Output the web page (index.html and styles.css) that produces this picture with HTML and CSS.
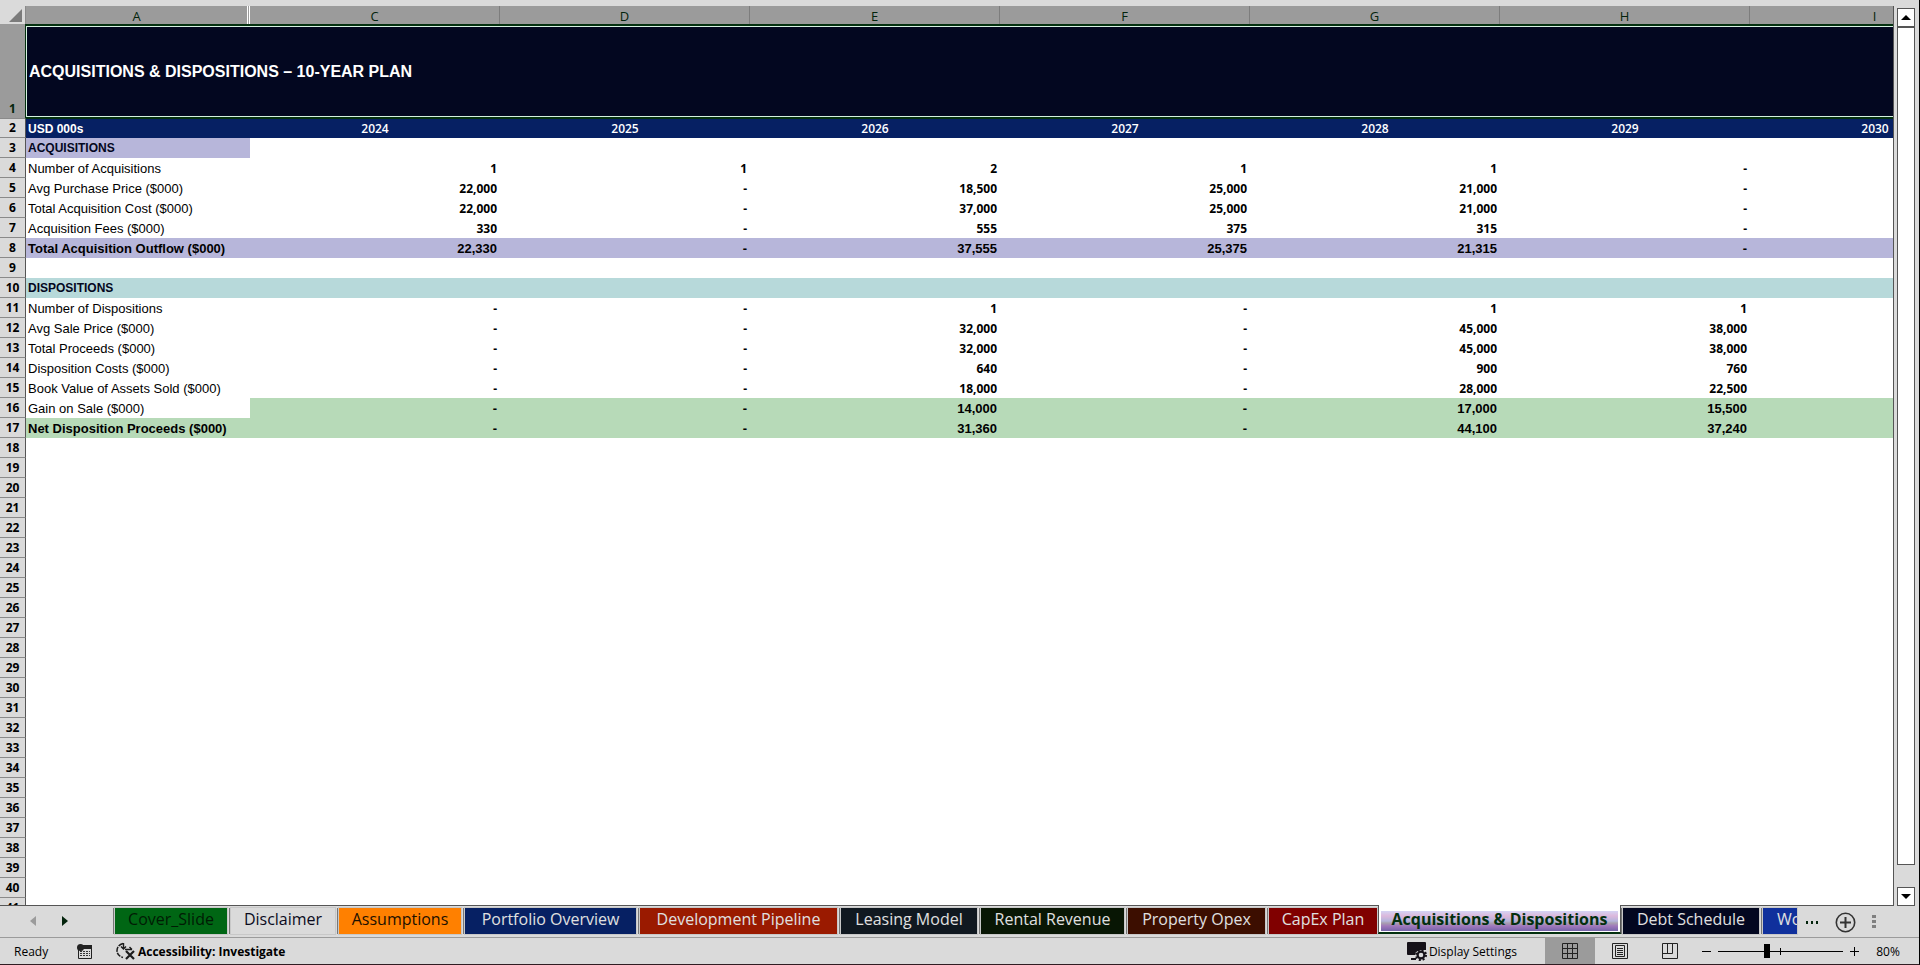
FILE: index.html
```html
<!DOCTYPE html>
<html lang="en">
<head>
    <meta charset="UTF-8">
    <meta name="viewport" content="width=device-width, initial-scale=1.0">
    <title>Acquisitions &amp; Dispositions</title>
    <link rel="stylesheet" href="styles.css">
</head>
<body>
    <div class="app">
        <div class="main">
            <div class="sheet">
                <table class="grid">
                    <colgroup>
                        <col class="col-head">
                        <col class="col-label">
                        <col span="7">
                    </colgroup>
                    <thead>
                        <tr class="letters">
                            <th class="corner"><svg width="13" height="13" viewBox="0 0 13 13"><path d="M13 0v13H0z" fill="#7b7b7b"/></svg></th>
                            <th class="after-hidden">A</th>
                            <th>C</th>
                            <th>D</th>
                            <th>E</th>
                            <th>F</th>
                            <th>G</th>
                            <th>H</th>
                            <th>I</th>
                        </tr>
                    </thead>
                    <tbody id="rows">
                        <tr class="title"><th>1</th><td colspan="8">ACQUISITIONS &amp; DISPOSITIONS – 10-YEAR PLAN</td></tr>
                        <tr class="years"><th>2</th><td>USD 000s</td><td>2024</td><td>2025</td><td>2026</td><td>2027</td><td>2028</td><td>2029</td><td>2030</td></tr>
                        <tr class="section"><th>3</th><td class="lilac">ACQUISITIONS</td><td colspan="7"></td></tr>
                        <tr><th>4</th><td>Number of Acquisitions</td><td>1</td><td>1</td><td>2</td><td>1</td><td>1</td><td>-</td><td></td></tr>
                        <tr><th>5</th><td>Avg Purchase Price ($000)</td><td>22,000</td><td>-</td><td>18,500</td><td>25,000</td><td>21,000</td><td>-</td><td></td></tr>
                        <tr><th>6</th><td>Total Acquisition Cost ($000)</td><td>22,000</td><td>-</td><td>37,000</td><td>25,000</td><td>21,000</td><td>-</td><td></td></tr>
                        <tr><th>7</th><td>Acquisition Fees ($000)</td><td>330</td><td>-</td><td>555</td><td>375</td><td>315</td><td>-</td><td></td></tr>
                        <tr class="total lilac"><th>8</th><td>Total Acquisition Outflow ($000)</td><td>22,330</td><td>-</td><td>37,555</td><td>25,375</td><td>21,315</td><td>-</td><td></td></tr>
                        <tr><th>9</th><td colspan="8"></td></tr>
                        <tr class="section teal"><th>10</th><td>DISPOSITIONS</td><td colspan="7"></td></tr>
                        <tr><th>11</th><td>Number of Dispositions</td><td>-</td><td>-</td><td>1</td><td>-</td><td>1</td><td>1</td><td></td></tr>
                        <tr><th>12</th><td>Avg Sale Price ($000)</td><td>-</td><td>-</td><td>32,000</td><td>-</td><td>45,000</td><td>38,000</td><td></td></tr>
                        <tr><th>13</th><td>Total Proceeds ($000)</td><td>-</td><td>-</td><td>32,000</td><td>-</td><td>45,000</td><td>38,000</td><td></td></tr>
                        <tr><th>14</th><td>Disposition Costs ($000)</td><td>-</td><td>-</td><td>640</td><td>-</td><td>900</td><td>760</td><td></td></tr>
                        <tr><th>15</th><td>Book Value of Assets Sold ($000)</td><td>-</td><td>-</td><td>18,000</td><td>-</td><td>28,000</td><td>22,500</td><td></td></tr>
                        <tr class="total green gain"><th>16</th><td>Gain on Sale ($000)</td><td>-</td><td>-</td><td>14,000</td><td>-</td><td>17,000</td><td>15,500</td><td></td></tr>
                        <tr class="total green"><th>17</th><td>Net Disposition Proceeds ($000)</td><td>-</td><td>-</td><td>31,360</td><td>-</td><td>44,100</td><td>37,240</td><td></td></tr>
                    </tbody>
                </table>
            </div>
            <div class="scrollbar">
                <button class="scroll-btn" aria-label="Scroll up"><svg width="10" height="5" viewBox="0 0 10 5"><path d="M5 0l5 5H0z"/></svg></button>
                <div class="scroll-track"><div class="scroll-thumb"></div></div>
                <button class="scroll-btn" aria-label="Scroll down"><svg width="10" height="5" viewBox="0 0 10 5"><path d="M0 0h10L5 5z"/></svg></button>
            </div>
        </div>

        <nav class="tabs">
            <div class="tab-nav">
                <button aria-label="Previous sheet"><svg width="6" height="10" viewBox="0 0 6 10"><path d="M6 0v10L0 5z" fill="#9b9b9b"/></svg></button>
                <button aria-label="Next sheet"><svg width="6" height="10" viewBox="0 0 6 10"><path d="M0 0v10l6-5z" fill="#03240c"/></svg></button>
            </div>
            <button class="tab cover">Cover_Slide</button>
            <button class="tab disclaimer">Disclaimer</button>
            <button class="tab assumptions">Assumptions</button>
            <button class="tab portfolio">Portfolio Overview</button>
            <button class="tab pipeline">Development Pipeline</button>
            <button class="tab leasing">Leasing Model</button>
            <button class="tab rental">Rental Revenue</button>
            <button class="tab opex">Property Opex</button>
            <button class="tab capex">CapEx Plan</button>
            <button class="tab active"><span>Acquisitions &amp; Dispositions</span></button>
            <button class="tab debt">Debt Schedule</button>
            <button class="tab working">Wo</button>
            <button class="more" aria-label="More sheets"><svg width="12" height="3" viewBox="0 0 12 3"><path d="M0 0h2v3H0zM5 0h2v3H5zM10 0h2v3h-2z" fill="#03240c"/></svg></button>
            <button class="add" aria-label="New sheet"><svg width="21" height="21" viewBox="0 0 21 21" fill="none" stroke="#333"><circle cx="10.5" cy="10.5" r="9.2" stroke-width="1.6"/><path d="M10.5 5v11M5 10.5h11" stroke-width="2"/></svg></button>
            <span class="grip"><svg width="4" height="13" viewBox="0 0 4 13"><path d="M0 0h4v3H0zM0 5h4v3H0zM0 10h4v3H0z" fill="#808080"/></svg></span>
        </nav>

        <footer class="status">
            <span class="ready">Ready</span>
            <button class="macro" aria-label="Record macro">
                <svg width="15" height="15" viewBox="0 0 15 15"><path d="M1.5 5v9.500h13V2H6" fill="none" stroke="#222"/><path d="M6 1h9v4H6z" fill="#222"/><circle cx="3.500" cy="3.500" r="3.500" fill="#222"/><path d="M3 7.500h10M3 9.500h10M3 11.500h10" stroke="#333" stroke-dasharray="2 1"/></svg>
            </button>
            <button class="access">
                <svg width="20" height="18" viewBox="0 0 20 18" fill="none" stroke="#1c1c1c"><path d="M7 1.500C3 2.500 1 5.500 1 8.500c0 3.500 2 6 6 7" stroke-width="1.500" stroke-dasharray="5 1"/><path d="M7.500 1v6M5 4.500l2.500 2.500L10 4.500M9 7.500h7M13.500 5L16 7.500" stroke-width="1.400"/><path d="M10 9l8 8M18 9l-8 8" stroke-width="2.200"/></svg>
                Accessibility: Investigate
            </button>
            <button class="display">
                <svg width="20" height="19" viewBox="0 0 20 19"><path d="M1 0h17q1 0 1 1v7h-7l-4 3v2H1q-1 0-1-1V1q0-1 1-1zM4 16h5v2H4z" fill="#151118"/><circle cx="14" cy="13" r="3.400" fill="none" stroke="#151118" stroke-width="2.200"/><circle cx="14" cy="13" r="5" fill="none" stroke="#151118" stroke-width="2" stroke-dasharray="2 1.930"/></svg>
                Display Settings
            </button>
            <button class="view selected" aria-label="Normal view"><svg width="16" height="16" viewBox="0 0 16 16" fill="none" stroke="#222"><path d="M.5.5h15v15H.5zM5.500.5v15M10.500.5v15M.5 5.500h15M.5 10.500h15"/></svg></button>
            <button class="view" aria-label="Page layout"><svg width="16" height="16" viewBox="0 0 16 16" fill="none" stroke="#222"><path d="M.5.5h15v15H.5zM3.500 2.500h9v11h-9zM5 5.500h6M5 7.500h6M5 9.500h6M5 11.500h6"/></svg></button>
            <button class="view" aria-label="Page break preview"><svg width="16" height="16" viewBox="0 0 16 16" fill="none" stroke="#222"><path d="M.5.5h15v15H.5zM.5 10.500h10V.5M5.500.5v10"/></svg></button>
            <button class="zoom-btn" aria-label="Zoom out"><svg width="9" height="9" viewBox="0 0 9 9"><path d="M0 4.500h9" stroke="#000"/></svg></button>
            <input class="zoom" type="range" min="10" max="190" value="80" aria-label="Zoom">
            <button class="zoom-btn" aria-label="Zoom in"><svg width="9" height="9" viewBox="0 0 9 9"><path d="M0 4.500h9M4.500 0v9" stroke="#000"/></svg></button>
            <button class="percent">80%</button>
        </footer>
    </div>

    <script>
        // empty rows below the data
        const rows = document.getElementById('rows');
        for (let n = 18; n <= 41; n++) {
            rows.insertAdjacentHTML('beforeend', `<tr><th>${n}</th><td colspan="8"></td></tr>`);
        }
    </script>
</body>
</html>
```
FILE: styles.css
```css
* { box-sizing: border-box; }
body {
    margin: 0;
    background: #dadada;
    color: #000;
    font-family: "Open Sans", "Noto Sans", sans-serif;
}
button {
    font: inherit;
    color: inherit;
    background: none;
    border: none;
    padding: 0;
}
svg { display: block; }
.app {
    height: 100vh;
    display: flex;
    flex-direction: column;
    padding-top: 6px;
    border-right: 1px solid #000;
    border-bottom: 1px solid #2f1c22;
}

/* sheet */
.main {
    flex: 1;
    min-height: 0;
    display: flex;
}
.sheet {
    flex: 1;
    min-width: 0;
    overflow: hidden;
    background: #fff;
    border-right: 1px solid #555;
    border-bottom: 1px solid #555;
}
.grid {
    width: 2000px;
    table-layout: fixed;
    border-collapse: separate;
    border-spacing: 0;
}
.col-head { width: 26px; }
.col-label { width: 224px; }
.grid th, .grid td {
    height: 20px;
    padding: 2px 3px 0;
    line-height: 18px;
    white-space: nowrap;
}
.grid th {
    padding: 1px 0 0;
    background: #dadada;
    border-right: 1px solid #555;
    border-bottom: 1px solid #8a8a8a;
    font-size: 12px;
    text-align: center;
}
.grid td {
    font-size: 12px;
    font-weight: 700;
    text-align: right;
}
.grid td:nth-child(2) {
    padding: 2px 2px 0;
    font-family: "Liberation Sans", Arial, sans-serif;
    font-size: 13px;
    font-weight: 400;
    text-align: left;
}
.grid .letters th {
    height: 18px;
    padding-top: 2px;
    line-height: 16px;
    background: #9b9b9b;
    border-right-color: #7d7d7d;
    border-bottom: none;
    color: #03240c;
    font-size: 13px;
    font-weight: 500;
}
.grid .letters .corner {
    background: #dadada;
    border-right-color: #8a8a8a;
    padding: 0 3px 2px 9px;
    vertical-align: bottom;
}
.grid .letters .after-hidden { border-right: 3px double #fff; }
.grid .title th {
    background: #9b9b9b;
    border-right-color: #03300f;
    color: #03240c;
    vertical-align: bottom;
}
.grid .title td:nth-child(2) {
    height: 95px;
    padding: 0 3px;
    background: #030720;
    border: 2px solid #03300f;
    border-left: none;
    box-shadow: inset 0 0 0 1px #d5f0e0;
    color: #fff;
    font-size: 16px;
    font-weight: 700;
}
.grid .years th, .grid .years td {
    height: 19px;
    padding-top: 0;
}
.grid .years td {
    background: #062063;
    color: #fff;
    font-weight: 600;
    text-align: center;
}
.grid .years td:nth-child(2) {
    font-size: 12px;
    font-weight: 700;
    text-align: left;
}
.grid .section td:nth-child(2) {
    padding-top: 0;
    color: #030720;
    font-size: 12px;
    font-weight: 700;
}
.grid .total td {
    font-family: "Liberation Sans", Arial, sans-serif;
    font-size: 13px;
    font-weight: 700;
}
.lilac td, .grid td.lilac { background: #b7b6da; }
.teal td { background: #b7d9da; }
.green td { background: #b7dab8; }
.grid .gain td:nth-child(2) {
    background: #fff;
    font-weight: 400;
}

/* scrollbar */
.scrollbar {
    width: 25px;
    padding: 2px 4px 0 3px;
    display: flex;
    flex-direction: column;
}
.scroll-btn {
    height: 19px;
    display: flex;
    align-items: center;
    justify-content: center;
    background: #fff;
    border: 1px solid #555;
}
.scroll-track {
    flex: 1;
    padding-bottom: 22px;
}
.scroll-thumb {
    height: 100%;
    background: #fff;
    border: 1px solid #555;
}

/* sheet tabs */
.tabs {
    height: 32px;
    display: flex;
    align-items: flex-start;
    border-bottom: 1px solid #9b9b9b;
    font-size: 16px;
}
.tab-nav {
    width: 113px;
    padding: 10px 0 0 30px;
    display: flex;
    gap: 26px;
}
.tab {
    height: 26px;
    margin: 2px 2px 0;
    padding-bottom: 4px;
    line-height: 22px;
    white-space: nowrap;
    overflow: hidden;
    color: #e0e0e0;
    box-shadow: 0 0 0 1px #c8c8c8, -2px 0 0 #777;
}
.tab-nav, .tab { flex-shrink: 0; }
.cover { width: 112px; background: #006614; color: #001c04; }
.disclaimer { width: 104px; background: #dadada; color: #0a0a1c; }
.assumptions { width: 122px; background: #ff8000; color: #1c1000; }
.portfolio { width: 171px; background: #062063; }
.pipeline { width: 197px; background: #9a1a00; }
.leasing { width: 136px; background: #101820; }
.rental { width: 143px; background: #081604; }
.opex { width: 137px; background: #3c0e00; }
.capex { width: 108px; background: #800000; }
.debt { width: 136px; background: #030720; }
.working {
    width: 34px;
    padding-left: 14px;
    background: #10309c;
    text-align: left;
}
.active {
    position: relative;
    width: 243px;
    height: 29px;
    margin: -1px 0 0 -1px;
    padding: 6px 2px 1px;
    background: #fff;
    border: 1px solid #555;
    border-width: 0 1px 2px;
    border-bottom-color: #03300f;
    box-shadow: none;
    color: #03300f;
    font-weight: 700;
}
.active span {
    display: block;
    height: 20px;
    line-height: 16px;
    background: linear-gradient(#d4d4f4, #dcb8dc 25%, #b4b4dc 50%, #a8a0b0 60%, #a078bc 75%, #7464a8);
}
.more { margin: 15px 0 0 7px; }
.add { margin: 6px 0 0 17px; }
.grip { margin: 9px 0 0 16px; }

/* status bar */
.status {
    height: 26px;
    display: flex;
    align-items: center;
    font-size: 12px;
}
.ready { width: 63px; padding-left: 14px; }
.macro { width: 53px; padding-left: 14px; }
.access {
    display: flex;
    align-items: center;
    gap: 2px;
    font-weight: 700;
}
.display {
    margin-left: auto;
    display: flex;
    align-items: center;
    gap: 2px;
}
.view {
    width: 50px;
    height: 26px;
    display: flex;
    align-items: center;
    justify-content: center;
}
.view.selected {
    margin-left: 28px;
    background: #9b9b9b;
}
.zoom-btn { margin-left: 7px; }
.zoom {
    appearance: none;
    width: 125px;
    height: 16px;
    margin: 0 0 0 7px;
    background:
        linear-gradient(#000, #000) 50% 50% / 1px 7px no-repeat,
        linear-gradient(#000, #000) 0 50% / 100% 1px no-repeat;
}
.zoom::-webkit-slider-thumb {
    appearance: none;
    width: 6px;
    height: 14px;
    background: #000;
}
.percent { width: 24px; margin: 0 19px 0 17px; }
```
